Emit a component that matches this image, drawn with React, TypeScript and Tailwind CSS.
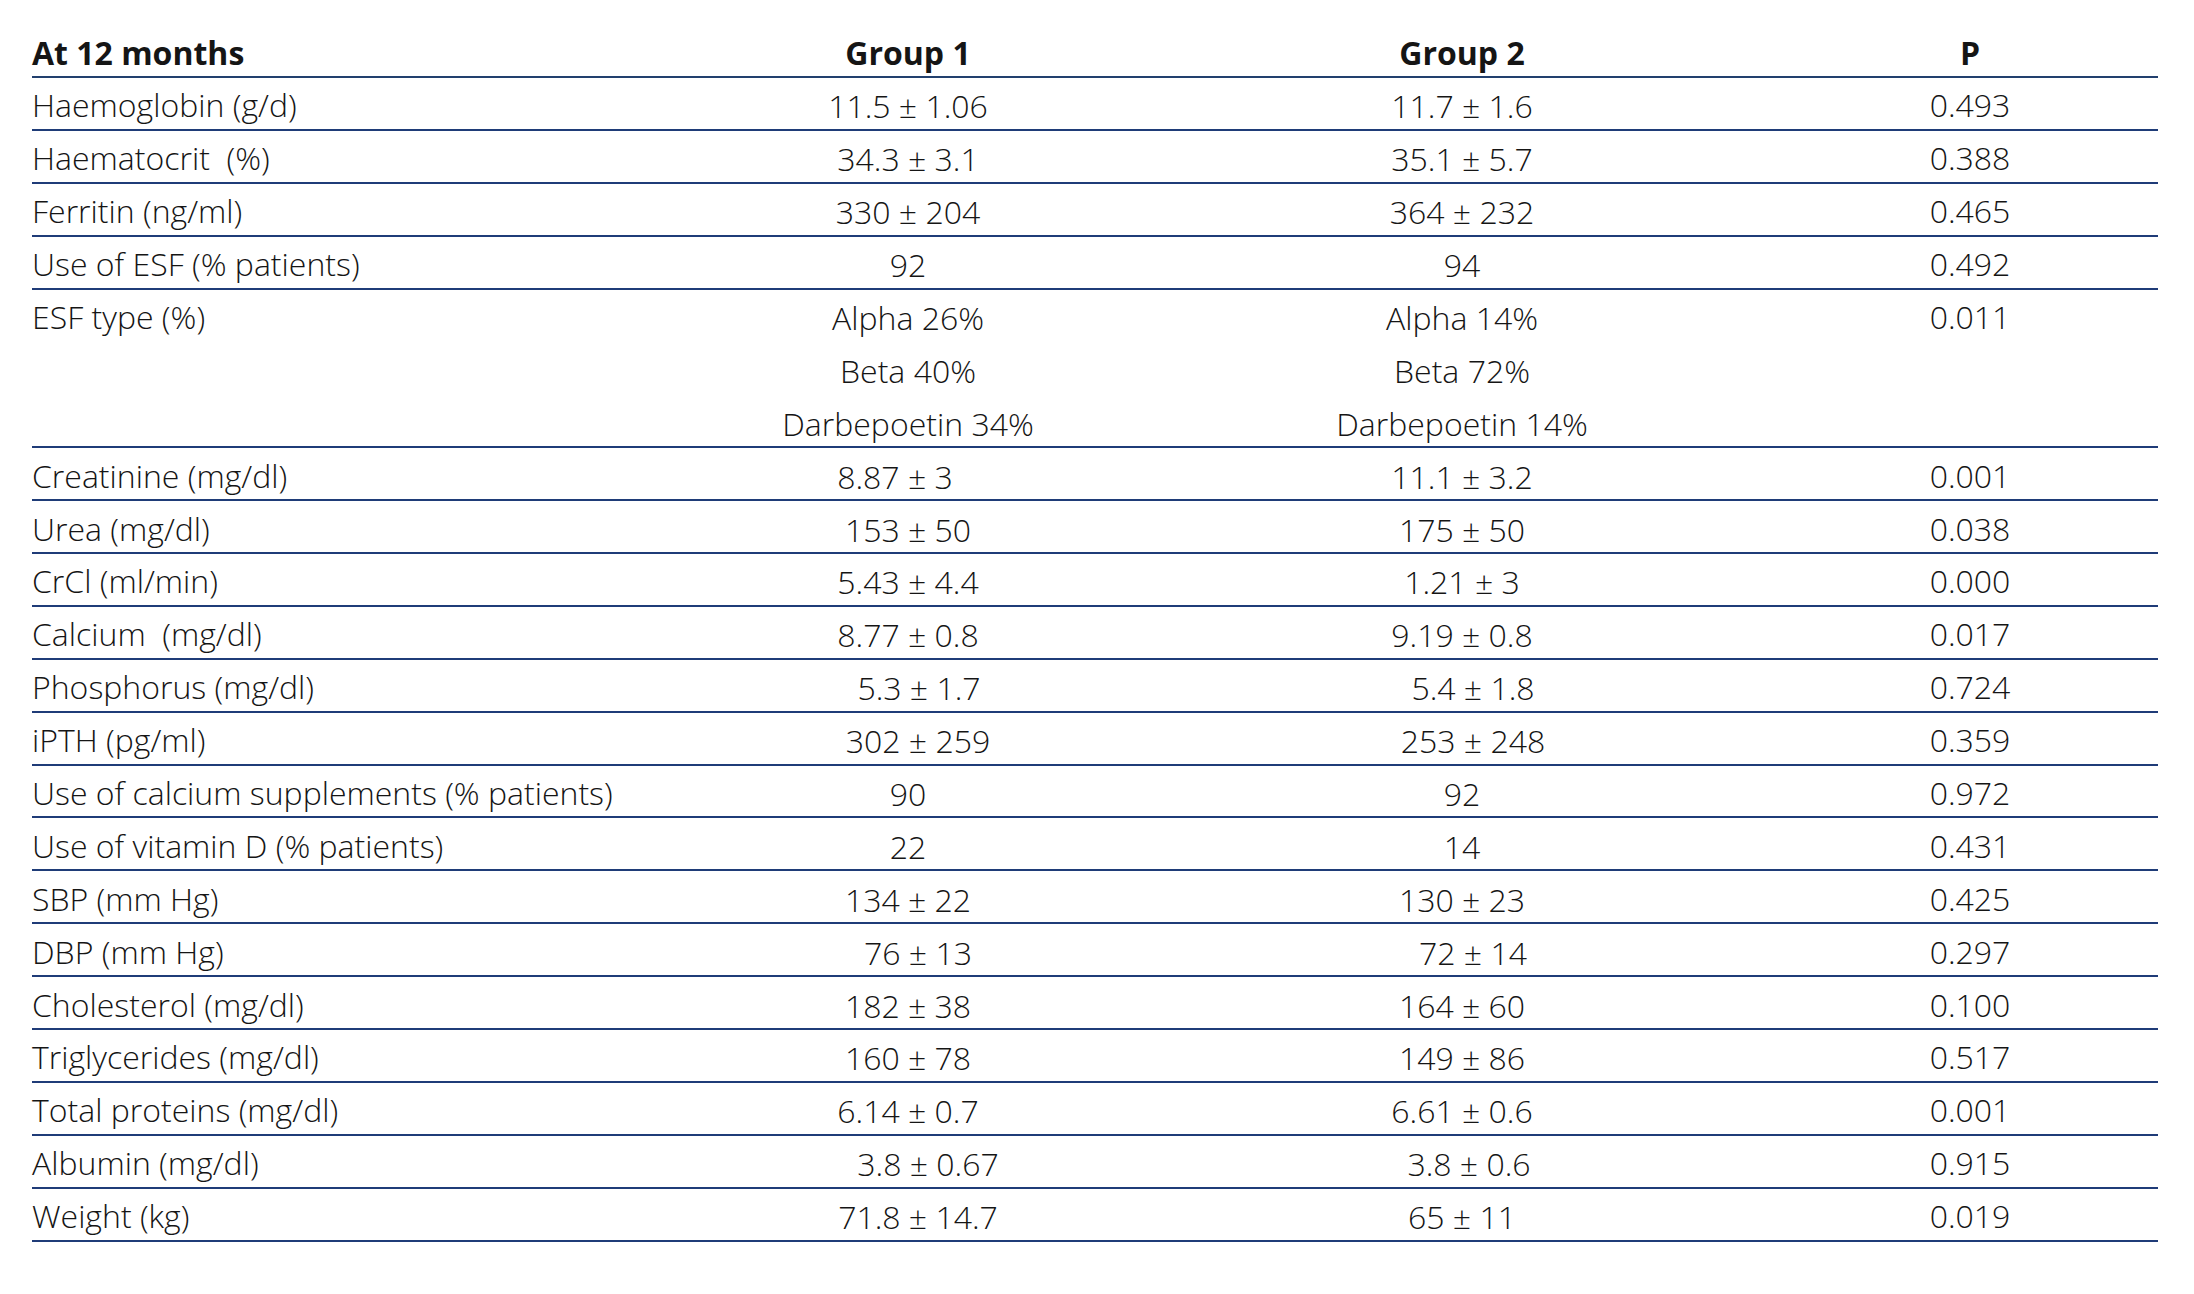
type Cell = { text: string; cls?: string };
type Row = { label: string; g1: Cell[]; g2: Cell[]; p: string };

const c = (text: string, cls = ""): Cell => ({ text, cls });

const rows: Row[] = [
  { label: "Haemoglobin (g/d)", g1: [c("11.5 ± 1.06")], g2: [c("11.7 ± 1.6")], p: "0.493" },
  { label: "Haematocrit  (%)", g1: [c("34.3 ± 3.1")], g2: [c("35.1 ± 5.7")], p: "0.388" },
  { label: "Ferritin (ng/ml)", g1: [c("330 ± 204")], g2: [c("364 ± 232")], p: "0.465" },
  { label: "Use of ESF (% patients)", g1: [c("92")], g2: [c("94")], p: "0.492" },
  {
    label: "ESF type (%)",
    g1: [c("Alpha 26%"), c("Beta 40%"), c("Darbepoetin 34%")],
    g2: [c("Alpha 14%"), c("Beta 72%"), c("Darbepoetin 14%")],
    p: "0.011",
  },
  { label: "Creatinine (mg/dl)", g1: [c("8.87 ± 3", "pr-[26px]")], g2: [c("11.1 ± 3.2")], p: "0.001" },
  { label: "Urea (mg/dl)", g1: [c("153 ± 50")], g2: [c("175 ± 50")], p: "0.038" },
  { label: "CrCl (ml/min)", g1: [c("5.43 ± 4.4")], g2: [c("1.21 ± 3")], p: "0.000" },
  { label: "Calcium  (mg/dl)", g1: [c("8.77 ± 0.8")], g2: [c("9.19 ± 0.8")], p: "0.017" },
  { label: "Phosphorus (mg/dl)", g1: [c("5.3 ± 1.7", "pl-[22px]")], g2: [c("5.4 ± 1.8", "pl-[22px]")], p: "0.724" },
  { label: "iPTH (pg/ml)", g1: [c("302 ± 259", "pl-[20px]")], g2: [c("253 ± 248", "pl-[22px]")], p: "0.359" },
  { label: "Use of calcium supplements (% patients)", g1: [c("90")], g2: [c("92")], p: "0.972" },
  { label: "Use of vitamin D (% patients)", g1: [c("22")], g2: [c("14")], p: "0.431" },
  { label: "SBP (mm Hg)", g1: [c("134 ± 22")], g2: [c("130 ± 23")], p: "0.425" },
  { label: "DBP (mm Hg)", g1: [c("76 ± 13", "pl-[20px]")], g2: [c("72 ± 14", "pl-[22px]")], p: "0.297" },
  { label: "Cholesterol (mg/dl)", g1: [c("182 ± 38")], g2: [c("164 ± 60")], p: "0.100" },
  { label: "Triglycerides (mg/dl)", g1: [c("160 ± 78")], g2: [c("149 ± 86")], p: "0.517" },
  { label: "Total proteins (mg/dl)", g1: [c("6.14 ± 0.7")], g2: [c("6.61 ± 0.6")], p: "0.001" },
  { label: "Albumin (mg/dl)", g1: [c("3.8 ± 0.67", "pl-[40px]")], g2: [c("3.8 ± 0.6", "pl-[14px]")], p: "0.915" },
  { label: "Weight (kg)", g1: [c("71.8 ± 14.7", "pl-[20px]")], g2: [c("65 ± 11")], p: "0.019" },
];

const grid = "grid grid-cols-[628px_496px_612px_390px]";

function Lines({ cells }: { cells: Cell[] }) {
  return (
    <div className="flex flex-col">
      {cells.map((cell, i) => (
        <div key={i} className={"h-[52.9px] pt-[4px] flex items-center justify-center " + (cell.cls ?? "")}>
          {cell.text}
        </div>
      ))}
    </div>
  );
}

export default function App() {
  return (
    <div className="min-h-screen bg-white pl-[32px] text-[#151515] font-['Open_Sans',sans-serif]">
      <div className="w-[2126px]">
        {/* header */}
        <div className={grid + " h-[78px] items-end pb-[7px] border-b-2 border-[#22406e] text-[32px] font-bold leading-none"}>
          <div>At 12 months</div>
          <div className="text-center">Group 1</div>
          <div className="text-center">Group 2</div>
          <div className="text-center pl-[14px]">P</div>
        </div>

        {rows.map((r) => (
          <div
            key={r.label}
            className={grid + " border-b-2 border-[#1f3c78] text-[32px] font-light leading-none"}
          >
            <div className="h-[50.9px] pt-[4px] flex items-center whitespace-pre">{r.label}</div>
            <div className="-mb-[2px]">
              <Lines cells={r.g1} />
            </div>
            <div className="-mb-[2px]">
              <Lines cells={r.g2} />
            </div>
            <div className="h-[50.9px] pt-[4px] flex items-center justify-center pl-[14px]">{r.p}</div>
          </div>
        ))}
      </div>
    </div>
  );
}
